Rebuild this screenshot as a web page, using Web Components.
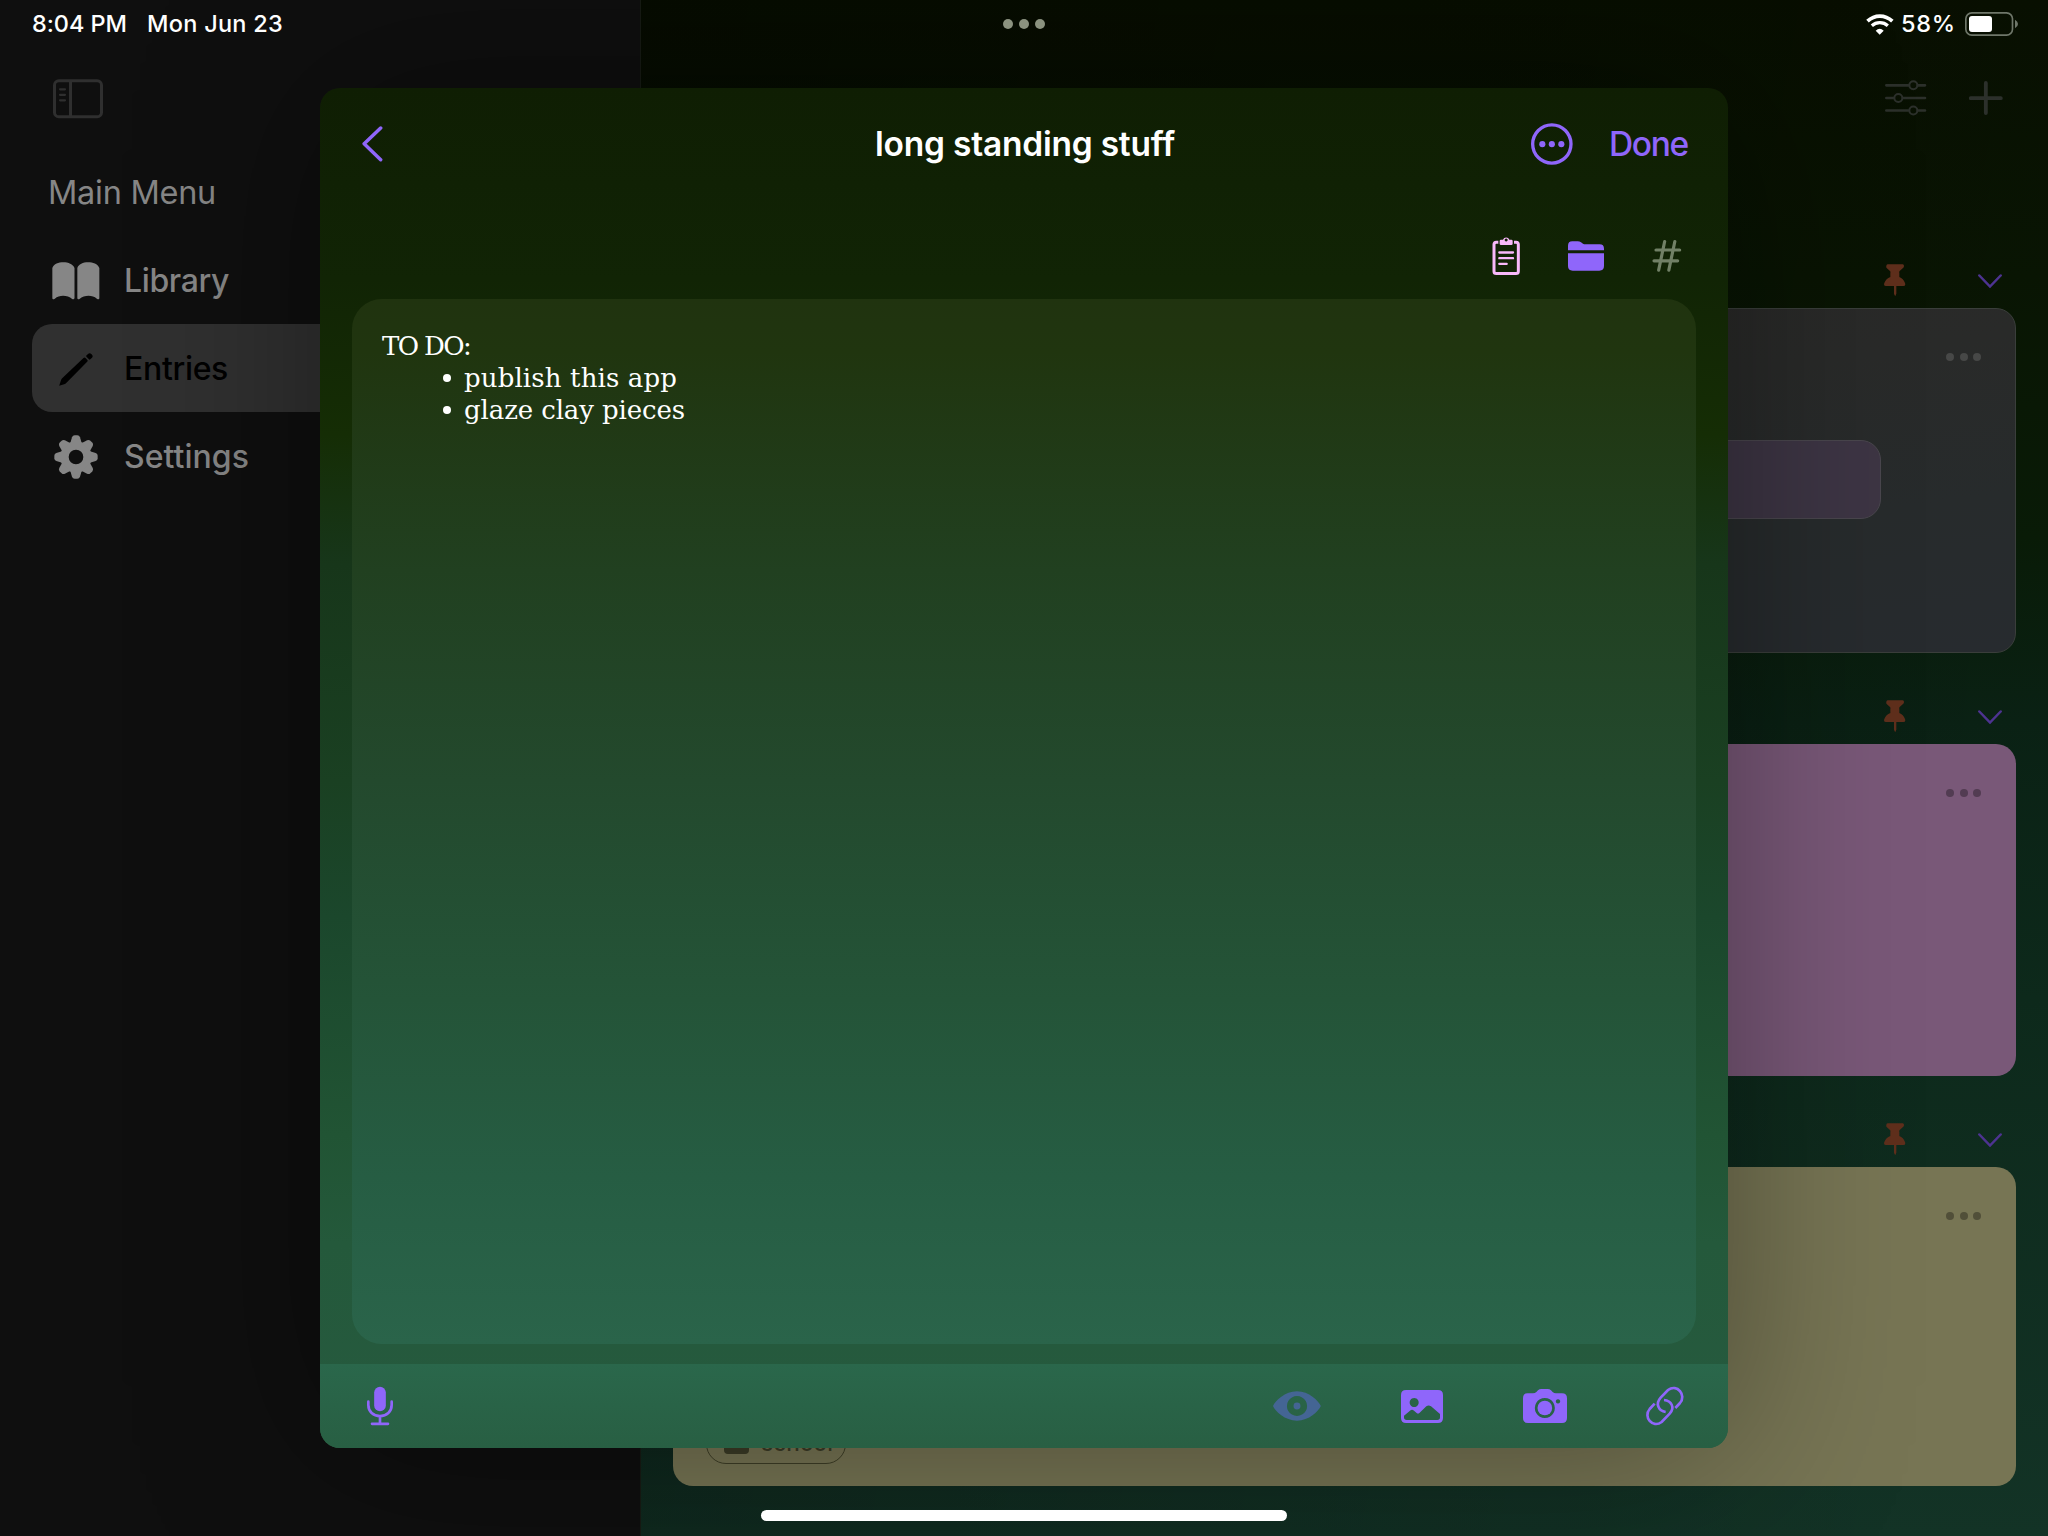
<!DOCTYPE html>
<html lang="en">
<head>
<meta charset="utf-8">
<title>Entries</title>
<style>
html,body{margin:0;padding:0;background:#020b02}
body{width:2048px;height:1536px;overflow:hidden;font-family:Inter,"Liberation Sans",sans-serif;color:#fff}
</style>
</head>
<body>
<app-screen></app-screen>
<script>
const P = '#8f66fa';
/* name: [width, height, viewBox, markup] */
const TOOTH = 'M-17-42L-12-59Q-10-65-4-65H4Q10-65 12-59L17-42z';
const ICONS = {
  sidebar: [50, 40, '159 236 150 120', '<rect x="163.500" y="241.500" width="141" height="108" rx="13" fill="none" stroke="currentColor" stroke-width="9"/><path d="M211.500 241v109" stroke="currentColor" stroke-width="9"/><path d="M180 267h15M180 283.500h15M180 300h15" stroke="currentColor" stroke-width="6.500" stroke-linecap="round"/>'],
  book: [48, 38, '158 62 144 114', '<path fill="currentColor" d="M159 80C164 68 177 63 192 63s29 6 33.500 17v90q-1 6-7 3c-14-12-38-13-52-1q-7.500 5-7.500-2zM234 80C238 69 251 63 266 63s29 5 34 17v90q0 7-7.500 2c-14-12-38-11-52 1q-6.500 3-6.500-3z"/>'],
  pencil: [34, 34, '177 332 102 102', '<path fill="currentColor" d="M177.500 433l5-15q1.500-4 4-7l64-61q3-3 6 0l5 5q3 3 0 6l-62 63q-3 3-7 5zM260 342l4-4q5-5 10 0l2 2q4 5 0 9l-5 5q-2 2-4 0l-7-7q-3-3 0-5z"/>'],
  gear: [44, 44, '-66 -66 132 132', '<g fill="currentColor"><path fill-rule="evenodd" d="M0-47A47 47 0 1 1 0 47A47 47 0 1 1 0-47M0-22A22 22 0 1 0 0 22A22 22 0 1 0 0-22"/>' + [0,45,90,135,180,225,270,315].map(a => `<path d="${TOOTH}" transform="rotate(${a})"/>`).join('') + '</g>'],
  back: [22, 36, '128 137 66 108', '<path d="M184 143L134.500 190.500l49.500 47.500" fill="none" stroke="currentColor" stroke-width="10.500" stroke-linecap="round" stroke-linejoin="round"/>'],
  more: [42, 42, '213 98 126 126', '<circle cx="275.500" cy="161" r="57.500" fill="none" stroke="currentColor" stroke-width="10"/><g fill="currentColor"><circle cx="247" cy="161.500" r="9.200"/><circle cx="275.500" cy="161.500" r="9.200"/><circle cx="304" cy="161.500" r="9.200"/></g>'],
  clipboard: [28, 40, '97 439 84 120', '<path d="M116 457.500h-6q-7 0-7 7v80q0 7 7 7h59q7 0 7-7v-80q0-7-7-7h-6" fill="none" stroke="currentColor" stroke-width="9" stroke-linecap="butt"/><path fill="currentColor" fill-rule="evenodd" d="M124 450h6a10 9 0 0 1 19 0h6q4 0 4 4v8q0 4-4 4h-31q-4 0-4-4v-8q0-4 4-4zM139.500 446.500a4.500 4.500 0 1 0 .01 0z"/><path d="M119 488.500h41M119 505.500h41M119 522.500h22" stroke="currentColor" stroke-width="7" stroke-linecap="round"/>'],
  folder: [36, 30, '324 452 108 90', '<path fill="currentColor" d="M324 480v-14q0-13 13-13h16q6 0 10 3l6 4q3 2 7 2h43q13 0 13 13v5zM324 489h108v38q0 14-14 14h-80q-14 0-14-14z"/>'],
  hash: [30, 34, '577 446 90 102', '<path d="M615 453.500L597 539.500M645.500 453.500L627.500 539.500M589 479h71M583 511.500h71" stroke="currentColor" stroke-width="9.500" stroke-linecap="round"/>'],
  mic: [28, 40, '-42 -60 84 120', '<rect x="-17.500" y="-58" width="35" height="74" rx="17.500" fill="currentColor"/><path d="M-35-13V-3C-35 17-20 30.500 0 30.500S35 17 35-3V-13M0 31V53M-24 53.500H24" fill="none" stroke="currentColor" stroke-width="8" stroke-linecap="round"/>'],
  eye: [48, 30, '99 152 145 92', '<path fill="currentColor" fill-rule="evenodd" d="M99 198C106 182 135 153 171.500 153S236 182 243.500 198C236 214 208 243 171.500 243S106 214 99 198zM171.500 167.500a30.500 30.500 0 1 0 .01 0z"/><circle cx="171.500" cy="198" r="10.500" fill="currentColor"/>'],
  image: [42, 33, '483 150 126 99', '<path fill="currentColor" fill-rule="evenodd" d="M498 150h96q15 0 15 15v69q0 15-15 15h-96q-15 0-15-15v-69q0-15 15-15zM522.500 174a13.500 13.500 0 1 0 .01 0zM492 227v5q0 8 8 8h92q8 0 8-8v-10l-27-23q-7-5-14 0l-20 19q-5 5-9 1l-8-7q-6-5-12 0z"/>'],
  camera: [44, 34, '849 147 132 102', '<path fill="currentColor" fill-rule="evenodd" d="M863 160h16q6 0 10-4l5-5q4-4 10-4h19q6 0 10 4l5 5q4 4 10 4h18q15 0 15 15v59q0 15-15 15H864q-15 0-15-15v-59q0-15 14-15zM914.500 174a30 30 0 1 0 .01 0zM954 177.500a6.500 6.500 0 1 0 .01 0z"/><circle cx="914.500" cy="204" r="22" fill="currentColor"/>'],
  link: [40, 40, '1215 138 120 120', '<g fill="none" stroke="currentColor" stroke-width="8"><path d="M1306 204L1320 189C1340 166 1312 130 1284 150L1262 173C1245 192 1256 213 1277 216"/><path d="M1244 191L1229 207C1209 230 1237 266 1265 246L1289 221C1306 202 1294 182 1272 180"/></g>'],
  sliders: [42, 36, '495 239 126 108', '<g stroke="currentColor" stroke-width="8" stroke-linecap="round" fill="none"><path d="M499 255h66M594 255h21M499 293h21M549 293h66M499 330.500h66M594 330.500h21"/></g><g stroke="currentColor" stroke-width="6" fill="none"><circle cx="580" cy="255" r="12"/><circle cx="535" cy="293" r="12"/><circle cx="580" cy="330.500" r="12"/></g>'],
  plus: [34, 34, '747 242 102 102', '<path d="M797.500 248v90M752.500 293.500h90" stroke="currentColor" stroke-width="11.500" stroke-linecap="round"/>'],
  pin: [22, 32, '491 791 66 96', '<path fill="currentColor" d="M502 792h45q4 0 4 5 0 4-3 6l-10 9q-2 2-1 6v12q12 5 17 18 3 9-5 9h-21v23l-3.500 8-3.500-8v-23h-24q-8 0-5-9 5-13 18-18v-12q1-4-1-6l-10-9q-2-2-1-6 0-5 4-5z"/>'],
  down: [24, 14, '773 822 72 42', '<path d="M777 826.500l32 33 32-33" fill="none" stroke="currentColor" stroke-width="7.500" stroke-linecap="round" stroke-linejoin="miter"/>'],
  wifi: [28, 21, '439 40 84 63', '<g fill="none" stroke="currentColor"><path d="M443.500 61.500C465 41 496 41 518 61.500" stroke-width="11"/><path d="M456.500 75C470 63 491 63 504.500 75" stroke-width="10"/></g><path d="M480 102l-12-12q12-11 24 0z" fill="currentColor"/>'],
  battery: [54, 24, '735 36 162 72', '<rect x="737.500" y="38.500" width="140" height="67" rx="18" fill="none" stroke="#6f776a" stroke-width="5"/><rect x="747" y="48" width="69" height="48" rx="9" fill="#fff"/><path fill="#6f776a" d="M885 59q9 5 9 13t-9 13z"/>'],
  tagfolder: [25, 22, '0 0 25 22', '<rect width="25" height="22" rx="4" fill="currentColor"/>']
};

class UiIcon extends HTMLElement {
  constructor(){ super(); this.attachShadow({mode:'open'}); }
  connectedCallback(){
    const [w,h,vb,body] = ICONS[this.getAttribute('name')];
    this.shadowRoot.innerHTML = `<style>:host{display:block;flex:none;width:${w}px;height:${h}px}svg{display:block}</style><svg width="${w}" height="${h}" viewBox="${vb}" preserveAspectRatio="none">${body}</svg>`;
  }
}
customElements.define('ui-icon', UiIcon);

/* One line of text whose tracking is set so that it fills the given width. */
class FitText extends HTMLElement {
  constructor(){
    super(); this.attachShadow({mode:'open'});
    this.shadowRoot.innerHTML = '<style>:host{display:block;white-space:pre;flex:none}span{display:inline-block}</style><span><slot></slot></span>';
  }
  connectedCallback(){
    const s = this.shadowRoot.querySelector('span'), target = +this.getAttribute('w');
    const fit = () => {
      s.style.letterSpacing = '0px';
      const w = s.getBoundingClientRect().width, n = this.textContent.length;
      if (w) s.style.letterSpacing = ((target - w) / n).toFixed(3) + 'px';
    };
    fit(); requestAnimationFrame(fit);
  }
}
customElements.define('fit-text', FitText);

function define(name, html){
  const t = document.createElement('template'); t.innerHTML = html;
  customElements.define(name, class extends HTMLElement {
    constructor(){ super(); this.attachShadow({mode:'open'}).appendChild(t.content.cloneNode(true)); }
  });
}

define('status-bar', `<style>
:host{display:grid;grid-template-columns:1fr auto 1fr;align-items:center;height:48px;padding:0 29px 0 32px;box-sizing:border-box;font-size:23.5px;font-weight:500;line-height:48px}
.l,.r{display:flex;align-items:center}.l{gap:20px}.r{justify-content:flex-end}
.d{display:flex;gap:6px;margin-right:3px}.d i{width:10px;height:10px;border-radius:5px;background:#8b927f}
</style>
<div class="l"><fit-text w="95">8:04 PM</fit-text><fit-text w="136">Mon Jun 23</fit-text></div>
<div class="d"><i></i><i></i><i></i></div>
<div class="r"><ui-icon name="wifi"></ui-icon><fit-text w="55" style="margin:0 9px 0 7px">58%</fit-text><ui-icon name="battery"></ui-icon></div>`);

define('menu-row', `<style>
:host{display:flex;align-items:center;height:88px;margin-left:32px;border-radius:20px 0 0 20px;color:#868686;font-size:32px;font-weight:500;line-height:89px}
:host([selected]){background:#303030;color:#000}
.i{width:64px;margin:1px 16px 0 12px;display:flex;justify-content:center}
</style><div class="i"><slot name="icon"></slot></div><slot></slot>`);

define('side-bar', `<style>
:host{display:flex;flex-direction:column;width:641px;height:1536px;flex:none;box-sizing:border-box;border-right:1px solid #171b14;background:#0f0f0f;padding-top:79px}
.t{margin-left:53px;height:40px;color:#2f2f2f}
.h{margin:50px 0 19px 48px;height:48px;line-height:48px;font-size:32.500px;color:#868686}
</style>
<div class="t"><ui-icon name="sidebar"></ui-icon></div>
<div class="h"><fit-text w="168">Main Menu</fit-text></div>
<menu-row><ui-icon slot="icon" name="book"></ui-icon><fit-text w="105">Library</fit-text></menu-row>
<menu-row selected><ui-icon slot="icon" name="pencil"></ui-icon><fit-text w="104">Entries</fit-text></menu-row>
<menu-row><ui-icon slot="icon" name="gear"></ui-icon><fit-text w="125">Settings</fit-text></menu-row>`);

define('section-head', `<style>
:host{display:flex;justify-content:flex-end;align-items:flex-end;height:92px;box-sizing:border-box;padding:0 14px 12px 0}
.p{color:#5f2f1c;margin-right:72px}.c{color:#4d3391;margin-bottom:8px}
</style><ui-icon class="p" name="pin"></ui-icon><ui-icon class="c" name="down"></ui-icon>`);

define('entry-card', `<style>
:host{display:flex;flex-direction:column;box-sizing:border-box;border-radius:20px;background:var(--bg);border:var(--bd,0)}
.d{display:flex;justify-content:flex-end;gap:5.3px;padding:var(--dp,45px 35px 0 0)}.d i{width:8px;height:8px;border-radius:4px;background:var(--dot)}
</style><div class="d"><i></i><i></i><i></i></div><slot></slot>`);

define('main-view', `<style>
:host{display:flex;flex-direction:column;flex:1;height:1536px;box-sizing:border-box;padding:79px 32px 0;
background:linear-gradient(100deg,rgba(0,0,0,.25),rgba(0,0,0,0) 92%),linear-gradient(180deg,#080f01 0,#091503 18%,#091b07 35%,#0a2114 47%,#0d291b 65%,#133326 100%)}
.b{display:flex;justify-content:flex-end;align-items:center;height:37px;gap:42px;padding-right:13px;margin-bottom:100px;color:#2c302b}
.q{width:899px;height:79px;box-sizing:border-box;margin:79px 0 0 308px;border-radius:20px;background:#3d3544;border:1.500px solid #49464d}
.tag{display:flex;align-items:center;gap:12px;width:140px;height:43px;box-sizing:border-box;margin:201px 0 0 33px;padding-left:17px;border:1.500px solid #3f3f27;border-radius:20px;color:#3c3c26;font-size:22.500px;font-weight:500;line-height:42px}
</style>
<div class="b"><ui-icon name="sliders"></ui-icon><ui-icon name="plus"></ui-icon></div>
<section-head></section-head>
<entry-card style="height:345px;--bg:linear-gradient(172deg,#2a2927,#292a29 40%,#272b2c 70%,#272b2f);--bd:1px solid #3a3e3b;--dot:#474847;--dp:44px 34px 0 0"><div class="q"></div></entry-card>
<section-head style="height:91px"></section-head>
<entry-card style="height:332px;--bg:#795878;--dot:#523c52"></entry-card>
<section-head style="height:91px"></section-head>
<entry-card style="height:319px;--bg:#777554;--dot:#514f39"><div class="tag"><ui-icon name="tagfolder"></ui-icon><fit-text w="72">school</fit-text></div></entry-card>`);

define('note-card', `<style>
:host{display:block;height:1045px;margin:0 32px;box-sizing:border-box;border-radius:30px;background:linear-gradient(180deg,#20330f 0,#20350f 5%,#214020 26%,#23492d 46%,#245438 67%,#265d43 84%,#2a644a 100%);padding:31px 0 0 30px;font-family:"DejaVu Serif","Liberation Serif",serif;font-weight:400;font-size:26px;line-height:32px}
ul{list-style:none;margin:0;padding:0 0 0 61px}li{display:flex;align-items:center;gap:13px;height:32px}li i{width:8px;height:8px;border-radius:4px;background:#fff}
</style><fit-text w="88">TO DO:</fit-text>
<ul><li><i></i><fit-text w="213">publish this app</fit-text></li><li><i></i><fit-text w="221">glaze clay pieces</fit-text></li></ul>`);

define('entry-modal', `<style>
:host{display:flex;flex-direction:column;width:1408px;height:1360px;border-radius:20px;overflow:hidden;color:#fff;
background:linear-gradient(180deg,#0f1e03 0,#112405 14%,#152d05 25.5%,#17361a 35%,#1a4022 51%,#1b472c 61%,#215434 77%,#24593b 85%,#265a3f 100%);box-shadow:0 0 180px rgba(0,0,0,.38)}
.h{display:grid;grid-template-columns:1fr auto 1fr;align-items:center;height:112px;padding:0 40px 0 42px;color:${P};font-size:33.500px;line-height:112px}
.h .r{display:flex;justify-content:flex-end;align-items:center;gap:36px}
.ti{color:#fff;font-weight:600}
.do{font-weight:500}
.t{display:flex;justify-content:flex-end;align-items:center;height:99px;padding:13px 46px 0 0;box-sizing:border-box;color:${P}}
.f{display:flex;align-items:center;height:84px;box-sizing:border-box;margin-top:20px;padding:0 43px 0 46px;background:linear-gradient(180deg,#2a674b,#285f43);color:${P}}
.f ui-icon+ui-icon{margin-left:80px}
</style>
<div class="h"><ui-icon name="back"></ui-icon><fit-text class="ti" w="300">long standing stuff</fit-text><div class="r"><ui-icon name="more"></ui-icon><fit-text class="do" w="79">Done</fit-text></div></div>
<div class="t"><ui-icon name="clipboard" style="color:#f8b8fa"></ui-icon><ui-icon name="folder" style="margin:-1px 48px 0"></ui-icon><ui-icon name="hash" style="color:#718066;margin-top:-1px"></ui-icon></div>
<note-card></note-card>
<div class="f"><ui-icon name="mic"></ui-icon><ui-icon name="eye" style="margin-left:auto;color:#446594"></ui-icon><ui-icon name="image"></ui-icon><ui-icon name="camera"></ui-icon><ui-icon name="link" style="margin-left:78px"></ui-icon></div>`);

define('app-screen', `<style>
:host{display:flex;position:relative;width:2048px;height:1536px;overflow:hidden}
status-bar{position:absolute;left:0;top:0;width:2048px}
entry-modal{position:absolute;left:320px;top:88px}
.home{position:absolute;left:761px;top:1510px;width:526px;height:11px;border-radius:6px;background:#fff}
</style><side-bar></side-bar><main-view></main-view><entry-modal></entry-modal><status-bar></status-bar><div class="home"></div>`);
</script>
</body>
</html>
